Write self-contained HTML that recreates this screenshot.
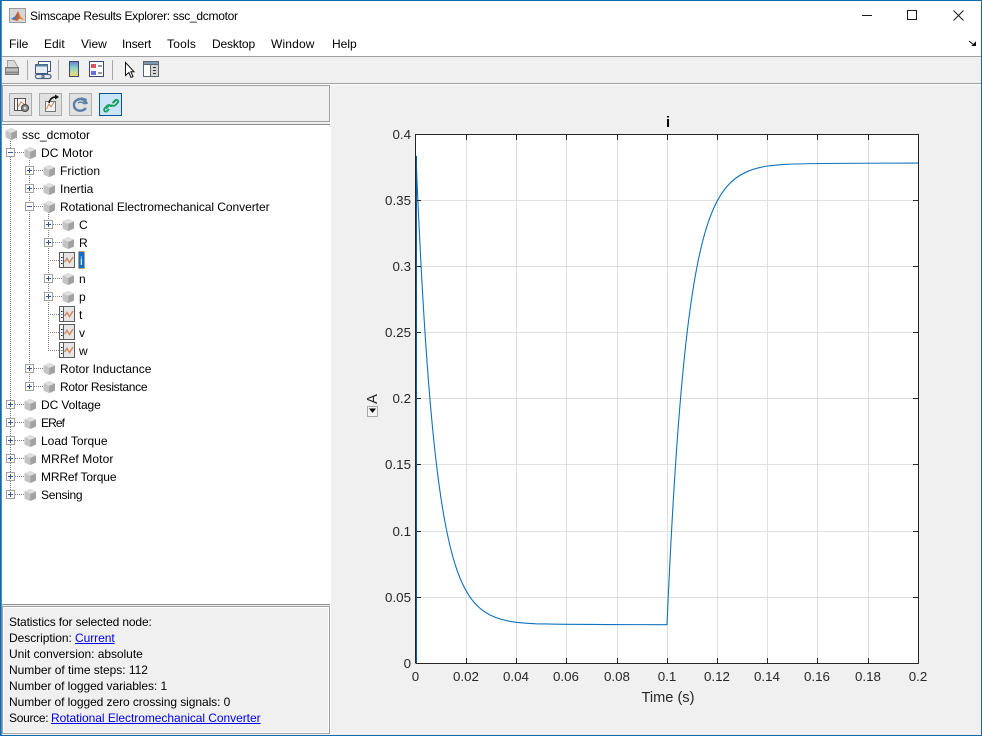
<!DOCTYPE html>
<html><head><meta charset="utf-8">
<style>
html,body{margin:0;padding:0;background:#f0f0f0}
#w{position:relative;width:982px;height:736px;overflow:hidden;background:#f0f0f0;font-family:"Liberation Sans",sans-serif;font-size:12px;color:#000}
.t{position:absolute;white-space:nowrap;line-height:14px;height:14px}
.b{position:absolute;box-sizing:border-box}
.tk{position:absolute;white-space:nowrap;font-size:13.33px;line-height:14px;color:#262626}
.r{text-align:right;width:40px;left:371px}
.c{text-align:center;width:50px}
a{color:#0000ee;text-decoration:underline}
svg{position:absolute;left:0;top:0}
</style></head><body>
<div id="w">
<div class="b" style="left:0;top:0;width:982px;height:56px;background:#fff"></div>
<div class="b" style="left:0;top:56px;width:982px;height:1px;background:#a0a0a0"></div>
<div class="b" style="left:0;top:83px;width:982px;height:1px;background:#a0a0a0"></div>
<div class="b" style="left:0;top:84px;width:982px;height:1px;background:#fff"></div>
<div class="b" style="left:2px;top:85px;width:328px;height:37px;border:1px solid #a0a0a0;background:#f0f0f0"></div>
<div class="b" style="left:1px;top:124px;width:330px;height:481px;border:1px solid #8a8f94;background:#fff"></div>
<div class="b" style="left:2px;top:606px;width:328px;height:128px;border:1px solid #a0a0a0;box-shadow:inset 0 0 0 1px #fff;background:#f0f0f0"></div>
<div class="b" style="left:330px;top:85px;width:1px;height:650px;background:#fff"></div>

<svg width="982" height="736" viewBox="0 0 982 736">
<defs>
<g id="cube"><path d="M0 -3.500L5.750 -6L11.500 -3.500V3.500L5.750 6L0 3.500Z" fill="#b4b4b4"/><path d="M0 -3.500L5.750 -6L11.500 -3.500L5.750 -1Z" fill="#dedede"/><path d="M5.750 -1V6L11.500 3.500V-3.500Z" fill="#a2a2a2"/><path d="M0 -3.500V3.500L5.750 6V-1Z" fill="#c4c4c4"/></g>
<g id="plus"><rect x="-4" y="-4" width="8" height="8" fill="#fff" stroke="#a2a2a2"/><path d="M-2.500 0H2.500M0 -2.500V2.500" stroke="#3a5599" fill="none"/></g>
<g id="minus"><rect x="-4" y="-4" width="8" height="8" fill="#fff" stroke="#a2a2a2"/><path d="M-2.500 0H2.500" stroke="#3a5599" fill="none"/></g>
<g id="sig"><rect x="0.500" y="0.500" width="15" height="15" fill="#f4f4f4" stroke="#5c5c5c"/><path d="M4.500 1V15" stroke="#5c5c5c"/><rect x="5" y="1" width="10" height="14" fill="#e6e6e6"/><path d="M2 5.500h1.500" stroke="#111"/><path d="M2 8.500h1.500" stroke="#2a7ec8"/><path d="M2 11.500h1.500" stroke="#111"/><path d="M5.500 10L8 6.500L10.500 10.500L14 5" fill="none" stroke="#cf8a5f" stroke-width="1.500"/></g>
<linearGradient id="cb" x1="0" y1="0" x2="0" y2="1"><stop offset="0" stop-color="#6d78d4"/><stop offset=".35" stop-color="#7cc8c8"/><stop offset=".7" stop-color="#c8dca0"/><stop offset="1" stop-color="#f2d468"/></linearGradient>
</defs>

<!-- window frame -->
<path d="M0 0.500H982M0.500 0V736M0 735.500H982M981.500 0V736" stroke="#0e6aad" fill="none"/>
<path d="M1.500 1V735" stroke="#4d94c4" fill="none"/>

<!-- title icon -->
<rect x="9.500" y="8.500" width="16" height="14" fill="#d6d6d6" stroke="#9a9a9a"/>
<path d="M11 19L15 16.500L18 11L20.500 16L24 20L19.500 18.500L17 21Z" fill="#d9582a"/>
<path d="M11 19L15 16.500L17 13.500L16.500 19L14 19.500Z" fill="#3a7dbb"/>
<path d="M18 11L20.500 16L24 20L20 18Z" fill="#e9a23b"/>
<!-- window controls -->
<path d="M862 15.500H872" stroke="#1a1a1a" fill="none"/>
<rect x="907.500" y="10.500" width="9" height="9" fill="none" stroke="#1a1a1a"/>
<path d="M953.500 10.500L963.500 20.500M963.500 10.500L953.500 20.500" stroke="#1a1a1a" fill="none"/>
<path d="M969 41L974 45M972.500 45.500H975.500V42.500Z" stroke="#111" fill="#111"/>

<!-- toolbar -->
<path d="M27.500 60V80M58.500 60V80M112.500 60V80" stroke="#a8a8a8"/>
<!-- printer -->
<path d="M7.500 60.500h6.500l3.500 6v2H7.500Z" fill="#dcdcdc" stroke="#a0a0a0"/>
<path d="M5.500 67.500h13v7H5.500Z" fill="#a6a6a6" stroke="#7a7a7a"/><path d="M6 70h12" stroke="#d8d8d8"/><path d="M6 72.500h12" stroke="#8a8a8a"/>
<!-- link print -->
<rect x="38.500" y="61.500" width="12" height="10" fill="#fff" stroke="#3c5a80"/><rect x="35.500" y="64.500" width="12" height="9" fill="#e8edf3" stroke="#3c5a80"/><rect x="35.500" y="64.500" width="12" height="2" fill="#5d7ea3"/>
<path d="M37 74.500h5a2 2 0 0 1 0 4h-4a2 2 0 0 1 -1-4ZM44 74.500h5a2 2 0 0 1 0 4h-5a2 2 0 0 1 0-4Z" fill="none" stroke="#49617f" stroke-width="1.200"/>
<!-- colorbar -->
<rect x="69.500" y="61.500" width="9" height="15" fill="url(#cb)" stroke="#3c4a70"/>
<!-- legend -->
<rect x="89.500" y="61.500" width="14" height="15" fill="#fff" stroke="#3c4a70"/><rect x="91" y="64" width="5" height="4" fill="#d9535f"/><rect x="91" y="71" width="5" height="4" fill="#6a6ee0"/><path d="M98 66h4M98 73h4" stroke="#333"/>
<!-- cursor -->
<path d="M125.500 62.500V75.500L128.800 72.500L131 77.500L133 76.500L130.800 71.700H134Z" fill="#fff" stroke="#111"/>
<!-- panel -->
<rect x="143.500" y="61.500" width="15" height="15" fill="#fff" stroke="#5c6670"/><rect x="143.500" y="61.500" width="15" height="3" fill="#7d99b0" stroke="#5c6670"/><rect x="150" y="65" width="8" height="11" fill="#d6d6d6"/><path d="M150.500 65V76" stroke="#5c6670"/><path d="M153 67.500h3M153 70.500h3M153 73.500h3" stroke="#333"/>

<!-- left buttons -->
<rect x="9.500" y="93.500" width="22" height="22" fill="#e1e1e1" stroke="#adadad"/>
<rect x="39.500" y="93.500" width="22" height="22" fill="#e1e1e1" stroke="#adadad"/>
<rect x="69.500" y="93.500" width="22" height="22" fill="#e1e1e1" stroke="#adadad"/>
<rect x="99.500" y="93.500" width="22" height="22" fill="#cce4f7" stroke="#005499"/>
<rect x="14.500" y="98.500" width="11" height="12" fill="#f4f4f4" stroke="#555"/><path d="M17.500 99V110" stroke="#555"/><path d="M18 107L21 102L24 104" fill="none" stroke="#d0865a"/><circle cx="25" cy="108" r="3.500" fill="#8e8e8e" stroke="#444"/><circle cx="25" cy="108" r="1.300" fill="#e1e1e1"/>
<rect x="45.500" y="101.500" width="10" height="10" fill="#f4f4f4" stroke="#777"/><path d="M46.500 109L49 104L51 107L54 102" fill="none" stroke="#d0865a"/><path d="M49 103C50 98 53 97 56 97" fill="none" stroke="#111" stroke-width="1.500"/><path d="M55 94.500L59 97L55 99.500Z" fill="#111"/>
<path d="M87 104C85 99 80 98 77 100C73 102 73 108 77 110C80 111.500 84 110.500 86 108" fill="none" stroke="#5a7fa8" stroke-width="2.400"/><path d="M78 103C80 101.500 83 102 84 104" fill="none" stroke="#5a7fa8" stroke-width="1.500"/><path d="M81 97L87 99L85 105Z" fill="#5a7fa8"/>
<path d="M106 108.500L109 105.500M113 103L116 100M109 109L106.500 111.500C104 112 103.500 109.500 105 108L107.500 105.500C109 104.500 111 105 111 107M112.500 103L115 100.500C116.500 99 119 100.500 118 102.500L115.500 105C114 106.500 112 106 111.500 104.500" fill="none" stroke="#13a05c" stroke-width="1.800"/>

<!-- tree lines -->
<g stroke="#808080" stroke-dasharray="1 1" fill="none">
<path d="M10.500 141V491M29.500 158V387M48.500 212V351"/>
<path d="M15 152.500H24M34 170.500H43M34 188.500H43M34 206.500H43M34 368.500H43M34 386.500H43M53 224.500H62M53 242.500H62M48 260.500H59M53 278.500H62M53 296.500H62M48 314.500H59M48 332.500H59M48 350.500H59M15 404.500H24M15 422.500H24M15 440.500H24M15 458.500H24M15 476.500H24M15 494.500H24"/>
</g>
<use href="#cube" x="5.500" y="134"/>
<use href="#minus" x="10.500" y="152.500"/><use href="#cube" x="24.500" y="153"/>
<use href="#plus" x="29.500" y="170.500"/><use href="#cube" x="43.500" y="171"/>
<use href="#plus" x="29.500" y="188.500"/><use href="#cube" x="43.500" y="189"/>
<use href="#minus" x="29.500" y="206.500"/><use href="#cube" x="43.500" y="207"/>
<use href="#plus" x="48.500" y="224.500"/><use href="#cube" x="62.500" y="225"/>
<use href="#plus" x="48.500" y="242.500"/><use href="#cube" x="62.500" y="243"/>
<use href="#sig" x="59" y="252"/>
<use href="#plus" x="48.500" y="278.500"/><use href="#cube" x="62.500" y="279"/>
<use href="#plus" x="48.500" y="296.500"/><use href="#cube" x="62.500" y="297"/>
<use href="#sig" x="59" y="306"/><use href="#sig" x="59" y="324"/><use href="#sig" x="59" y="342"/>
<use href="#plus" x="29.500" y="368.500"/><use href="#cube" x="43.500" y="369"/>
<use href="#plus" x="29.500" y="386.500"/><use href="#cube" x="43.500" y="387"/>
<use href="#plus" x="10.500" y="404.500"/><use href="#cube" x="24.500" y="405"/>
<use href="#plus" x="10.500" y="422.500"/><use href="#cube" x="24.500" y="423"/>
<use href="#plus" x="10.500" y="440.500"/><use href="#cube" x="24.500" y="441"/>
<use href="#plus" x="10.500" y="458.500"/><use href="#cube" x="24.500" y="459"/>
<use href="#plus" x="10.500" y="476.500"/><use href="#cube" x="24.500" y="477"/>
<use href="#plus" x="10.500" y="494.500"/><use href="#cube" x="24.500" y="495"/>
<!-- selected -->
<rect x="78.500" y="251.500" width="6" height="17" fill="#0a6fd0" stroke="#e8860c" stroke-dasharray="1 1"/>

<!-- plot -->
<rect x="416" y="134" width="502" height="529" fill="#fff"/>
<g stroke="#dfdfdf" fill="none">
<path d="M466.500 134V663M516.500 134V663M566.500 134V663M617.500 134V663M667.500 134V663M717.500 134V663M767.500 134V663M817.500 134V663M868.500 134V663"/>
<path d="M416 200.500H918M416 266.500H918M416 332.500H918M416 398.500H918M416 464.500H918M416 531.500H918M416 597.500H918"/>
</g>
<path d="M416 156.450C419.330 238.250 422.670 299.020 426 347.450C429.330 395.880 432.670 431.760 436 460.450C439.330 489.140 442.670 510.470 446 527.450C449.330 544.430 452.670 557.100 456 567.150C462.670 587.240 469.330 597.390 476 604.450C482.670 611.510 489.330 615.110 496 617.580C509.330 622.520 522.670 623.170 536 623.780C580 624.600 620 624.650 667 624.650C670.330 548.030 673.670 490.160 677 443.600C680.330 397.040 683.670 361.900 687 333.600C690.330 305.300 693.670 283.900 697 266.700C700.330 249.500 703.670 236.560 707 226.100C713.670 205.180 720.330 194.140 727 186.400C733.670 178.660 740.330 174.540 747 171.690C760.330 165.990 773.670 165.050 787 164.270C800 163.700 850 163.100 918 163.100" fill="none" stroke="#0f72bd" stroke-width="1.100"/>
<path d="M415.500 663V134.500H918.500V663.500H415.500" fill="none" stroke="#262626"/>
<g stroke="#262626" fill="none">
<path d="M466.500 663V658M516.500 663V658M566.500 663V658M617.500 663V658M667.500 663V658M717.500 663V658M767.500 663V658M817.500 663V658M868.500 663V658"/>
<path d="M466.500 135V140M516.500 135V140M566.500 135V140M617.500 135V140M667.500 135V140M717.500 135V140M767.500 135V140M817.500 135V140M868.500 135V140"/>
<path d="M416 200.500H421M416 266.500H421M416 332.500H421M416 398.500H421M416 464.500H421M416 531.500H421M416 597.500H421"/>
<path d="M918 200.500H913M918 266.500H913M918 332.500H913M918 398.500H913M918 464.500H913M918 531.500H913M918 597.500H913"/>
</g>
<path d="M416.500 156V663" stroke="#0a5c9a" fill="none"/>
<!-- A dropdown -->
<rect x="367.500" y="406.500" width="10" height="10" fill="#f4f4f4" stroke="#a8a8a8"/>
<path d="M369 408.500H376L372.500 413Z" fill="#000"/>
</svg>

<div class="t" style="left:30px;top:9px;letter-spacing:-.29px">Simscape Results Explorer: ssc_dcmotor</div>
<div class="t" style="left:9px;top:37px">File</div>
<div class="t" style="left:44px;top:37px">Edit</div>
<div class="t" style="left:81px;top:37px">View</div>
<div class="t" style="left:122px;top:37px;letter-spacing:-.15px">Insert</div>
<div class="t" style="left:167px;top:37px;letter-spacing:.2px">Tools</div>
<div class="t" style="left:212px;top:37px;letter-spacing:-.15px">Desktop</div>
<div class="t" style="left:271px;top:37px;letter-spacing:.15px">Window</div>
<div class="t" style="left:332px;top:37px">Help</div>

<div class="t" style="left:22px;top:128px">ssc_dcmotor</div>
<div class="t" style="left:41px;top:146px;letter-spacing:.1px">DC Motor</div>
<div class="t" style="left:60px;top:164px;letter-spacing:.1px">Friction</div>
<div class="t" style="left:60px;top:182px">Inertia</div>
<div class="t" style="left:60px;top:200px;letter-spacing:-.05px">Rotational Electromechanical Converter</div>
<div class="t" style="left:79px;top:218px">C</div>
<div class="t" style="left:79px;top:236px">R</div>
<div class="t" style="left:80px;top:254px;color:#fff">i</div>
<div class="t" style="left:79px;top:272px">n</div>
<div class="t" style="left:79px;top:290px">p</div>
<div class="t" style="left:79px;top:308px">t</div>
<div class="t" style="left:79px;top:326px">v</div>
<div class="t" style="left:79px;top:344px">w</div>
<div class="t" style="left:60px;top:362px">Rotor Inductance</div>
<div class="t" style="left:60px;top:380px;letter-spacing:-.3px">Rotor Resistance</div>
<div class="t" style="left:41px;top:398px;letter-spacing:-.1px">DC Voltage</div>
<div class="t" style="left:41px;top:416px;letter-spacing:-.9px">ERef</div>
<div class="t" style="left:41px;top:434px">Load Torque</div>
<div class="t" style="left:41px;top:452px;letter-spacing:.1px">MRRef Motor</div>
<div class="t" style="left:41px;top:470px;letter-spacing:-.15px">MRRef Torque</div>
<div class="t" style="left:41px;top:488px;letter-spacing:-.3px">Sensing</div>

<div class="t" style="left:9px;top:615px;letter-spacing:-.14px">Statistics for selected node:</div>
<div class="t" style="left:9px;top:631px"><span style="letter-spacing:-.05px">Description: </span><a style="letter-spacing:-.05px;position:absolute;left:66px">Current</a></div>
<div class="t" style="left:9px;top:647px;letter-spacing:-.04px">Unit conversion: absolute</div>
<div class="t" style="left:9px;top:663px;letter-spacing:-.04px">Number of time steps: 112</div>
<div class="t" style="left:9px;top:679px;letter-spacing:-.07px">Number of logged variables: 1</div>
<div class="t" style="left:9px;top:695px;letter-spacing:-.07px">Number of logged zero crossing signals: 0</div>
<div class="t" style="left:9px;top:711px"><span style="letter-spacing:-.3px">Source: </span><a style="letter-spacing:-.05px;position:absolute;left:42px">Rotational Electromechanical Converter</a></div>

<div class="tk r" style="top:128px">0.4</div>
<div class="tk r" style="top:194px">0.35</div>
<div class="tk r" style="top:260px">0.3</div>
<div class="tk r" style="top:326px">0.25</div>
<div class="tk r" style="top:392px">0.2</div>
<div class="tk r" style="top:458px">0.15</div>
<div class="tk r" style="top:525px">0.1</div>
<div class="tk r" style="top:591px">0.05</div>
<div class="tk r" style="top:657px">0</div>
<div class="tk c" style="left:390.500px;top:670px">0</div>
<div class="tk c" style="left:441px;top:670px">0.02</div>
<div class="tk c" style="left:491px;top:670px">0.04</div>
<div class="tk c" style="left:541px;top:670px">0.06</div>
<div class="tk c" style="left:592px;top:670px">0.08</div>
<div class="tk c" style="left:642px;top:670px">0.1</div>
<div class="tk c" style="left:692px;top:670px">0.12</div>
<div class="tk c" style="left:742px;top:670px">0.14</div>
<div class="tk c" style="left:792px;top:670px">0.16</div>
<div class="tk c" style="left:843px;top:670px">0.18</div>
<div class="tk c" style="left:893px;top:670px">0.2</div>
<div class="tk" style="left:641.500px;top:691px;font-size:14.600px;color:#262626">Time (s)</div>
<div class="tk" style="left:666px;top:116px;font-size:14.600px;font-weight:bold;color:#000">i</div>
<div class="tk" style="left:367px;top:392px;font-size:14.600px;transform:rotate(-90deg);transform-origin:center;width:12px;text-align:center">A</div>
</div>
</body></html>
